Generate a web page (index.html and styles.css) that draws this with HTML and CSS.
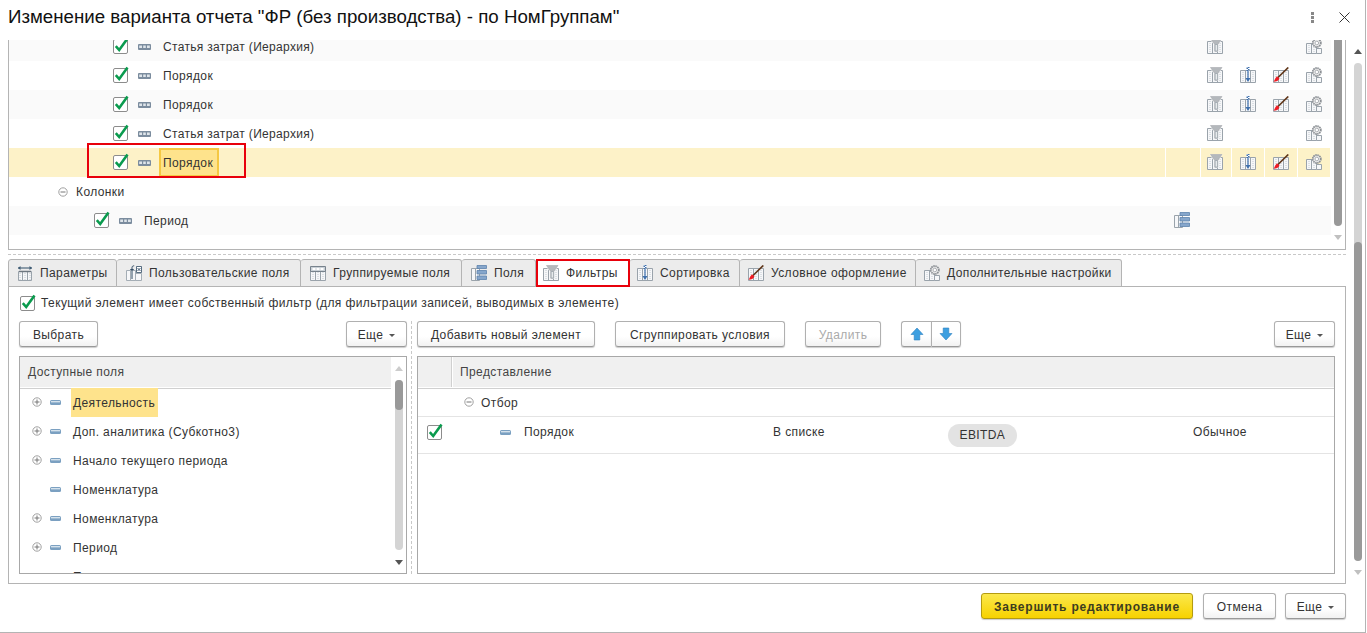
FILE: index.html
```html
<!DOCTYPE html>
<html lang="ru">
<head>
<meta charset="utf-8">
<title>Изменение варианта отчета</title>
<link rel="stylesheet" href="styles.css">
</head>
<body>
<svg class="defs" width="0" height="0" aria-hidden="true">
  <defs>
    <symbol id="cols" viewBox="0 0 16 16">
      <path d="M.5 3.500h15v12H.5z" fill="#f6f7f9" stroke="#9aa3ab"/>
      <path d="M5.500 3.500v12M10.500 3.500v12" stroke="#9aa3ab" fill="none"/>
      <path d="M3 5v10M8 5v10M13 5v10" stroke="#c2c9cf" stroke-dasharray="1 1" fill="none"/>
    </symbol>
    <symbol id="i-filter" viewBox="0 0 16 16">
      <use href="#cols"/>
      <path d="M2.500 .5h13.200L11.200 7v6.800H7V7z" fill="#fff"/>
      <path d="M3.500 .5h11.500L10.800 6.500v6.800H7.700V6.500z" fill="#b4b8bc" stroke="#a6aaaf" stroke-width=".6"/>
      <path d="M8.200 6.500h2.100v6.500H8.200z" fill="#f6f7f9" stroke="#949ea6" stroke-width=".7"/>
    </symbol>
    <symbol id="i-sort" viewBox="0 0 16 16">
      <use href="#cols"/>
      <path d="M6.500 0h3v3.500h-3z" fill="#fff"/>
      <path d="M6.500 .5h1.500v1.500h-1.500zM8 2h1.500v1.500H8zM8 0h1.500v1H8zM6.500 3h1.500v1h-1.500z" fill="#3f70ad"/>
      <path d="M8 4v9" stroke="#3f70ad" stroke-width="1.200"/>
      <path d="M5.500 11h5L8 15z" fill="#3f70ad"/>
    </symbol>
    <symbol id="i-paint" viewBox="0 0 16 16">
      <use href="#cols"/>
      <path d="M15.300 .5 5 10.500" stroke="#5f3518" stroke-width="1.700"/>
      <path d="M4 9.200 6.500 11.500C6 13.500 3 14.800.5 14.800c1-1 1.500-4 3.500-5.600z" fill="#ef1c24"/>
    </symbol>
    <symbol id="i-gear" viewBox="0 0 16 16">
      <path d="M.5 5.500h10v10H.5zM5.500 5.500v10" fill="#f6f7f9" stroke="#9aa3ab"/>
      <path d="M3 7v8M8 7v8" stroke="#c2c9cf" stroke-dasharray="1 1" fill="none"/>
      <path d="M10.500 10.500h5v5h-5z" fill="#f6f7f9" stroke="#9aa3ab"/>
      <circle cx="10.800" cy="5" r="4" fill="#eee" stroke="#8d9196" stroke-width="1.800" stroke-dasharray="1.500 .6"/>
      <circle cx="10.800" cy="5" r="1.800" fill="#fff" stroke="#9a9ea3" stroke-width=".8"/>
    </symbol>
    <symbol id="i-group" viewBox="0 0 16 16">
      <path d="M.5 3.500h8v12h-8zM4.500 3.500v12" fill="#f6f7f9" stroke="#9aa3ab"/>
      <path d="M6 .5h9.500v3H6zM6 5.500h9.500v3.500H6zM6 11h9.500v3.500H6z" fill="#86a6cb" stroke="#5d83ad" stroke-width=".8"/>
    </symbol>
    <symbol id="i-params" viewBox="0 0 16 16">
      <path d="M1.500 6.500h13v9h-13z" fill="#f6f7f9" stroke="#9aa3ab"/>
      <path d="M5.500 6.500v9M10.500 6.500v9" stroke="#9aa3ab"/>
      <path d="M3 8v7M8 8v7M13 8v7" stroke="#c2c9cf" stroke-dasharray="1 1" fill="none"/>
      <path d="M2 6.500h12" stroke="#6d7780" stroke-width="1.500"/>
      <path d="M1 3h14" stroke="#3e5b74" stroke-width="1.100"/>
      <path d="M1 3l2.500-2v4zM15 3l-2.500-2v4z" fill="#3e5b74"/>
    </symbol>
    <symbol id="i-user" viewBox="0 0 16 16">
      <path d="M.5 5.500h4v10h-4zM4.500 5.500h5v10h-5zM9.500 8.500h6v7h-6z" fill="#f6f7f9" stroke="#a4adb5"/>
      <path d="M6 14V2.700C6 1.400 6.800 .8 8.200 .8M4.300 4.500h3.400" stroke="#2f4a63" fill="none"/>
      <path d="M10.500 1.500h5v6h-5z" fill="#fff" stroke="#2f4a63" stroke-width=".8"/>
      <path d="M11.500 3l3 3M14.500 3l-3 3" stroke="#2f4a63" stroke-width=".9"/>
    </symbol>
    <symbol id="i-grp" viewBox="0 0 16 16">
      <use href="#cols"/>
      <path d="M.5 1.500h15v5H.5z" fill="#c9d0d6" stroke="#78838d"/>
      <path d="M2.500 3h3v2h-3zM6.500 3h3v2h-3zM10.500 3h3v2h-3z" fill="#fff"/>
    </symbol>
    <symbol id="i-check" viewBox="0 0 16 17">
      <rect x=".5" y="2.500" width="14" height="14" rx="1.500" fill="#fff" stroke="#8c8c8c"/>
      <path d="M2.800 9.200 6.200 13 14.500 1.500" fill="none" stroke="#0a9b4e" stroke-width="2.600"/>
    </symbol>
    <symbol id="i-field" viewBox="0 0 13 6">
      <rect width="13" height="6" rx="1" fill="#7b8c9e"/>
      <path d="M1.200 1.500h2.800v2.500H1.200zM5.200 1.500h2.600v2.500H5.200zM9 1.500h2.800v2.500H9z" fill="#dfe5ea"/>
    </symbol>
    <symbol id="i-minus" viewBox="0 0 11 5">
      <rect width="11" height="5" rx="1.500" fill="#7ba0c1"/>
      <rect x="1" y="1" width="9" height="1.400" fill="#d5e2ec"/>
    </symbol>
    <symbol id="i-exp" viewBox="0 0 10 10">
      <circle cx="5" cy="5" r="4.200" fill="#fff" stroke="#a0a0a0"/>
      <path d="M2.500 5h5M5 2.500v5" stroke="#777"/>
    </symbol>
    <symbol id="i-col" viewBox="0 0 10 10">
      <circle cx="5" cy="5" r="4.200" fill="#fff" stroke="#a0a0a0"/>
      <path d="M2.500 5h5" stroke="#777"/>
    </symbol>
    <symbol id="i-up" viewBox="0 0 14 14">
      <path d="M7 1 13 7.500H9.800V13H4.200V7.500H1z" fill="#3d9fe0" stroke="#2b7fc0" stroke-width=".6"/>
    </symbol>
    <symbol id="i-down" viewBox="0 0 14 14">
      <path d="M7 13 13 6.500H9.800V1H4.200V6.500H1z" fill="#3d9fe0" stroke="#2b7fc0" stroke-width=".6"/>
    </symbol>
  </defs>
</svg>

<div class="dialog">
  <header class="head">
    <h1 class="title">Изменение варианта отчета "ФР (без производства) - по НомГруппам"</h1>
    <div class="head-tools">
      <span class="dots"><i></i><i></i><i></i></span>
      <svg class="close" viewBox="0 0 11 11"><path d="M.5 .5l10 10M10.500 .5l-10 10" stroke="#333" stroke-width="1" fill="none"/></svg>
    </div>
  </header>

  <main class="content">
    <section class="tree">
      <div class="tree-rows">
        <div class="row alt lvl2">
          <svg class="ck"><use href="#i-check"/></svg><svg class="fld"><use href="#i-field"/></svg><span class="cell tight">Статья затрат (Иерархия)</span>
          <span class="acts"><svg class="ic"><use href="#i-filter"/></svg><b></b><b></b><svg class="ic"><use href="#i-gear"/></svg></span>
        </div>
        <div class="row lvl2">
          <svg class="ck"><use href="#i-check"/></svg><svg class="fld"><use href="#i-field"/></svg><span class="cell">Порядок</span>
          <span class="acts"><svg class="ic"><use href="#i-filter"/></svg><svg class="ic"><use href="#i-sort"/></svg><svg class="ic"><use href="#i-paint"/></svg><svg class="ic"><use href="#i-gear"/></svg></span>
        </div>
        <div class="row alt lvl2">
          <svg class="ck"><use href="#i-check"/></svg><svg class="fld"><use href="#i-field"/></svg><span class="cell">Порядок</span>
          <span class="acts"><svg class="ic"><use href="#i-filter"/></svg><svg class="ic"><use href="#i-sort"/></svg><svg class="ic"><use href="#i-paint"/></svg><svg class="ic"><use href="#i-gear"/></svg></span>
        </div>
        <div class="row lvl2">
          <svg class="ck"><use href="#i-check"/></svg><svg class="fld"><use href="#i-field"/></svg><span class="cell tight">Статья затрат (Иерархия)</span>
          <span class="acts"><svg class="ic"><use href="#i-filter"/></svg><b></b><b></b><svg class="ic"><use href="#i-gear"/></svg></span>
        </div>
        <div class="row sel lvl2">
          <svg class="ck"><use href="#i-check"/></svg><svg class="fld"><use href="#i-field"/></svg><span class="cell cur">Порядок</span>
          <span class="acts seps"><svg class="ic"><use href="#i-filter"/></svg><svg class="ic"><use href="#i-sort"/></svg><svg class="ic"><use href="#i-paint"/></svg><svg class="ic"><use href="#i-gear"/></svg></span>
          <span class="redbox"></span>
        </div>
        <div class="row lvl0">
          <svg class="tw"><use href="#i-col"/></svg><span class="cell">Колонки</span>
        </div>
        <div class="row alt lvl1">
          <svg class="ck"><use href="#i-check"/></svg><svg class="fld"><use href="#i-field"/></svg><span class="cell">Период</span>
          <span class="acts one"><svg class="ic"><use href="#i-group"/></svg></span>
        </div>
      </div>
      <div class="vbar inner"><i class="thumb"></i><i class="arr dn"></i></div>
    </section>

    <div class="hsplit"></div>

    <nav class="tabs">
      <a class="tab"><svg class="ic"><use href="#i-params"/></svg>Параметры</a>
      <a class="tab"><svg class="ic"><use href="#i-user"/></svg>Пользовательские поля</a>
      <a class="tab"><svg class="ic"><use href="#i-grp"/></svg>Группируемые поля</a>
      <a class="tab"><svg class="ic"><use href="#i-group"/></svg>Поля</a>
      <a class="tab active"><svg class="ic"><use href="#i-filter"/></svg>Фильтры</a>
      <a class="tab"><svg class="ic"><use href="#i-sort"/></svg>Сортировка</a>
      <a class="tab"><svg class="ic"><use href="#i-paint"/></svg>Условное оформление</a>
      <a class="tab"><svg class="ic"><use href="#i-gear"/></svg>Дополнительные настройки</a>
    </nav>

    <section class="panel">
      <label class="own"><svg class="ck"><use href="#i-check"/></svg>Текущий элемент имеет собственный фильтр (для фильтрации записей, выводимых в элементе)</label>
      <div class="split">
        <div class="pane left">
          <div class="bar">
            <button class="btn w-pick">Выбрать</button>
            <button class="btn more">Еще<i class="caret"></i></button>
          </div>
          <div class="list">
            <div class="lhead">Доступные поля</div>
            <div class="lrow"><svg class="tw"><use href="#i-exp"/></svg><svg class="mn"><use href="#i-minus"/></svg><span class="lt hl">Деятельность</span></div>
            <div class="lrow"><svg class="tw"><use href="#i-exp"/></svg><svg class="mn"><use href="#i-minus"/></svg><span class="lt">Доп. аналитика (Субкотно3)</span></div>
            <div class="lrow"><svg class="tw"><use href="#i-exp"/></svg><svg class="mn"><use href="#i-minus"/></svg><span class="lt">Начало текущего периода</span></div>
            <div class="lrow"><span class="tw"></span><svg class="mn"><use href="#i-minus"/></svg><span class="lt">Номенклатура</span></div>
            <div class="lrow"><svg class="tw"><use href="#i-exp"/></svg><svg class="mn"><use href="#i-minus"/></svg><span class="lt">Номенклатура</span></div>
            <div class="lrow"><svg class="tw"><use href="#i-exp"/></svg><svg class="mn"><use href="#i-minus"/></svg><span class="lt">Период</span></div>
            <div class="lrow"><span class="tw"></span><svg class="mn"><use href="#i-minus"/></svg><span class="lt">Порядок</span></div>
            <div class="vbar lbar"><i class="thumb"></i><i class="arr up"></i><i class="arr dn"></i></div>
          </div>
        </div>
        <div class="vsplit"></div>
        <div class="pane right">
          <div class="bar">
            <button class="btn w-add">Добавить новый элемент</button>
            <button class="btn w-grp">Сгруппировать условия</button>
            <button class="btn w-del off">Удалить</button>
            <span class="pair"><button class="btn sq"><svg><use href="#i-up"/></svg></button><button class="btn sq"><svg><use href="#i-down"/></svg></button></span>
            <button class="btn more end">Еще<i class="caret"></i></button>
          </div>
          <div class="list">
            <div class="lhead rh"><span class="c0"></span><span class="c1">Представление</span></div>
            <div class="frow f1"><svg class="tw"><use href="#i-col"/></svg>Отбор</div>
            <div class="frow f2">
              <svg class="ck"><use href="#i-check"/></svg>
              <svg class="mn"><use href="#i-minus"/></svg>
              <span class="fname">Порядок</span>
              <span class="fcond">В списке</span>
              <span class="fval"><span class="pill">EBITDA</span></span>
              <span class="fkind">Обычное</span>
            </div>
          </div>
        </div>
      </div>
    </section>

    <footer class="foot">
      <button class="btn primary">Завершить редактирование</button>
      <button class="btn w-cancel">Отмена</button>
      <button class="btn more">Еще<i class="caret"></i></button>
    </footer>
  </main>

  <div class="vbar outer"><i class="track"></i><i class="thumb"></i><i class="arr up"></i><i class="arr dn"></i></div>
</div>
</body>
</html>
```

FILE: styles.css
```css
* { box-sizing: border-box; }
html, body { margin: 0; height: 100%; }
body { background: #fff; overflow: hidden; font: 12px "Liberation Sans", Arial, sans-serif; letter-spacing: .4px; color: #333; }
.defs { position: absolute; }
svg { display: block; flex: none; }

.dialog { position: relative; width: 1366px; height: 633px; border-right: 1px solid #b4b4b4; border-bottom: 1px solid #b4b4b4; }

.head { height: 40px; display: flex; align-items: center; justify-content: space-between; padding: 0 15px 6px 8px; }
.title { margin: 0; font-size: 18.7px; font-weight: 400; letter-spacing: 0; color: #111; }
.head-tools { display: flex; align-items: center; gap: 25px; }
.dots { display: flex; flex-direction: column; gap: 1px; }
.dots i { width: 3px; height: 3px; background: #888; }
.close { width: 11px; height: 11px; }

.content { padding-left: 8px; width: 1346px; }

.tree { position: relative; height: 210px; border: 1px solid #b4b4b4; border-top: 0; overflow: hidden; }
.tree-rows { margin-top: -8px; width: 1322px; }
.row { position: relative; display: flex; align-items: center; height: 29px; }
.row.alt { background: #fafafa; }
.row.sel { background: #fdf2c8; }
.lvl2 { padding-left: 104px; }
.lvl1 { padding-left: 85px; }
.lvl0 { padding-left: 49px; }
.row .ck { width: 16px; height: 17px; margin-top: -3px; }
.fld { width: 13px; height: 6px; margin: 0 8px 0 9px; }
.cell { display: flex; align-items: center; height: 29px; padding: 0 4px; }
.tight { letter-spacing: .32px; }
.cur { background: #fee38c; border: 2px solid #f5c842; padding: 0 4px 0 2px; }
.row .tw { width: 10px; height: 10px; margin-right: 4px; }
.redbox { position: absolute; left: 78px; top: -5px; width: 159px; height: 35px; border: 2px solid #e8000b; }
.acts { margin-left: auto; display: flex; width: 132px; flex: none; height: 29px; }
.acts .ic, .acts b { display: block; width: 16px; height: 16px; margin: 6px 9px 0 8px; }
.seps { position: relative; background: repeating-linear-gradient(90deg, transparent 0 32px, #fff 32px 33px); }
.seps::before { content: ""; position: absolute; left: -34px; top: 0; width: 34px; height: 29px; border-left: 1px solid #fff; border-right: 1px solid #fff; }
.acts.one { width: 165px; }
.ic { width: 16px; height: 16px; }

.vbar { position: absolute; }
.vbar .thumb { position: absolute; background: #999; border-radius: 4px; }
.arr { position: absolute; width: 0; height: 0; border-left: 4px solid transparent; border-right: 4px solid transparent; }
.arr.up { border-bottom: 5px solid #555; }
.arr.dn { border-top: 5px solid #c0c0c0; }
.inner { right: 0; top: 0; bottom: 0; width: 11px; }
.inner .thumb { left: 0; top: -10px; width: 8px; height: 196px; }
.inner .arr.dn { left: 0; top: 195px; }
.outer { left: 1354px; top: 40px; width: 8px; height: 540px; }
.track { position: absolute; left: 0; top: 23px; width: 8px; height: 200px; background: #d4d4d4; border-radius: 4px 4px 0 0; }
.outer .thumb { left: 0; top: 202px; width: 8px; height: 319px; }
.outer .arr.up { left: 0; top: 9px; }
.outer .arr.dn { left: 0; top: 530px; }

.hsplit { height: 9px; position: relative; }
.hsplit::after { content: ""; position: absolute; left: 0; right: 0; top: 4px; border-top: 1px dashed #c8c8c8; }

.tabs { display: flex; height: 28px; position: relative; z-index: 1; margin-bottom: -1px; }
.tab { display: flex; flex: none; align-items: center; gap: 7px; height: 28px; padding: 0 0 0 8px; background: #ececec; border: 1px solid #b4b4b4; border-left: 0; border-radius: 3px 3px 0 0; color: #333; }
.tab:first-child { border-left: 1px solid #b4b4b4; }
.tab:nth-child(1) { width: 109px; }
.tab:nth-child(2) { width: 184px; padding-left: 9px; }
.tab:nth-child(3) { width: 161px; padding-left: 9px; }
.tab:nth-child(4) { width: 74px; padding-left: 9px; }
.tab:nth-child(5) { width: 94px; padding-left: 5px; }
.tab:nth-child(6) { width: 110px; padding-left: 7px; }
.tab:nth-child(7) { width: 176px; }
.tab:nth-child(8) { width: 206px; }
.tab.active { background: #fff; border: 2px solid #e8000b; border-radius: 0; }

.panel { height: 298px; border: 1px solid #b4b4b4; padding: 7px 10px 9px; }
.own { display: flex; align-items: center; gap: 5px; height: 17px; margin-bottom: 10px; }
.own .ck { width: 16px; height: 17px; margin-left: 1px; }

.split { display: flex; height: 253px; }
.pane { display: flex; flex-direction: column; }
.left { width: 388px; }
.right { width: 918px; }
.vsplit { width: 10px; position: relative; }
.vsplit::after { content: ""; position: absolute; left: 4px; top: 0; bottom: 0; border-left: 1px dashed #c8c8c8; }

.bar { display: flex; height: 26px; margin-bottom: 9px; justify-content: space-between; }
.right .bar { justify-content: flex-start; gap: 20px; }
.btn { height: 26px; padding: 1px 0 0; border: 1px solid #b0b0b0; border-bottom-color: #999; border-radius: 3px; background: linear-gradient(#fff 60%, #f2f2f2); box-shadow: 0 1px 1px #ccc; font: 12px "Liberation Sans", Arial, sans-serif; letter-spacing: .4px; color: #333; display: flex; align-items: center; justify-content: center; }
.w-pick { width: 79px; }
.more { width: 61px; }
.w-add { width: 178px; }
.w-grp { width: 170px; }
.w-del { width: 76px; }
.off { color: #aaa; }
.end { margin-left: auto; }
.caret { width: 0; height: 0; margin: 1px 0 0 6px; border-left: 3px solid transparent; border-right: 3px solid transparent; border-top: 3px solid #555; }
.pair { display: flex; }
.sq { width: 30px; padding-top: 0; }
.sq:first-child { border-radius: 3px 0 0 3px; border-right: 0; }
.sq:last-child { border-radius: 0 3px 3px 0; }
.sq svg { width: 14px; height: 14px; }

.list { position: relative; height: 218px; border: 1px solid #a8a8a8; overflow: hidden; }
.lhead { height: 31px; margin-right: 15px; padding: 0 8px; display: flex; align-items: center; background: #f0f0f0; border-bottom: 1px solid #fff; box-shadow: 0 1px #d0d0d0; color: #444; }
.lhead.rh { margin-right: 0; padding: 0; }
.c0 { width: 34px; height: 30px; border-right: 1px solid #d0d0d0; box-shadow: 1px 0 #fff; }
.c1 { padding-left: 8px; }
.lrow { display: flex; align-items: center; height: 29px; padding-left: 12px; }
.lrow .tw { width: 10px; margin-right: 8px; margin-top: -2px; }
.mn { width: 11px; height: 5px; }
.lt { display: flex; align-items: center; height: 29px; margin-left: 10px; padding: 0 2px; color: #333; }
.hl { background: #fee38c; padding-right: 3px; }
.lbar { right: 0; top: 0; bottom: 0; width: 15px; }
.lbar::before { content: ""; position: absolute; left: 4px; top: 23px; width: 8px; height: 170px; background: #d4d4d4; border-radius: 4px; }
.lbar .thumb { left: 4px; top: 23px; width: 8px; height: 30px; }
.lbar .arr.up { left: 4px; top: 9px; border-bottom-color: #ccc; }
.lbar .arr.dn { left: 4px; top: 203px; border-top-color: #555; }

.frow { display: flex; align-items: center; border-bottom: 1px solid #e4e4e4; }
.f1 { height: 29px; padding: 1px 0 0 46px; }
.f1 .tw { width: 10px; height: 10px; margin-right: 7px; margin-top: -1px; }
.f2 { height: 37px; padding-left: 9px; position: relative; }
.f2 .ck { width: 16px; height: 17px; margin-top: -7px; }
.f2 .mn { margin-left: 57px; margin-top: -5px; }
.fname { margin-left: 13px; width: 249px; margin-top: -7px; }
.fcond { width: 175px; margin-top: -7px; }
.pill { display: inline-block; height: 23px; line-height: 23px; padding: 0 11.500px; background: #e3e3e3; border-radius: 12px; }
.fval { width: 245px; }
.fkind { margin-top: -7px; }

.foot { display: flex; justify-content: flex-end; gap: 9px; padding-top: 9px; }
.primary { width: 212px; margin-right: 1px; background: linear-gradient(#fbe84c, #f7d200); border-color: #b49b10; font-weight: 700; letter-spacing: .8px; color: #3c3c20; }
.w-cancel { width: 73px; }
```
